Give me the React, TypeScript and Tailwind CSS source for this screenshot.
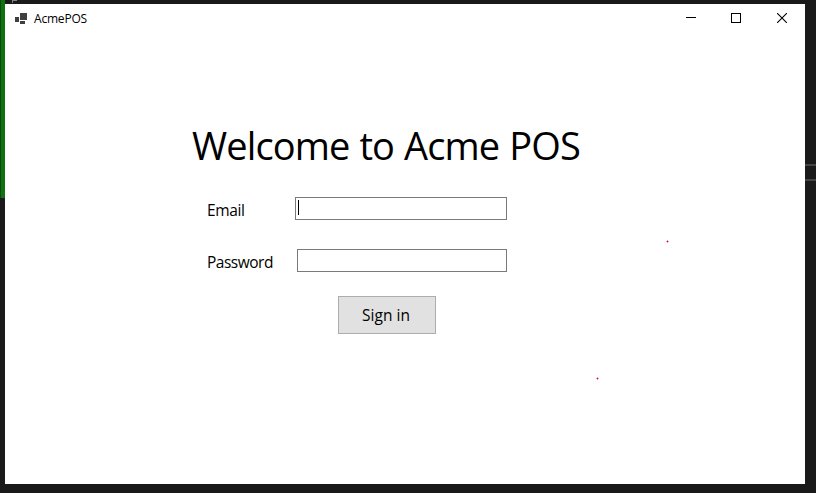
import { useState } from 'react';

const labelFont = "font-['Open_Sans','Noto_Sans',sans-serif]";

function TitleBar() {
  return (
    <header className="flex h-[30px] shrink-0 items-start justify-between">
      <div className="flex h-[29px] items-center pl-[10px]">
        <svg width="13" height="11" viewBox="0 0 13 11" shapeRendering="crispEdges" fill="#3f3f3f" aria-hidden="true">
          <path d="M0 4h4v5H0zM5 0h7v7H5zM5 8h5v3H5z" />
        </svg>
        <span className="ml-[6px] pt-px text-xs leading-[28px] tracking-[-0.2px]">AcmePOS</span>
      </div>
      <div className="flex h-[28px]">
        <button aria-label="Minimize" className="flex w-[46px] items-center justify-center">
          <svg width="10" height="10" shapeRendering="crispEdges"><path d="M0 4h10v1H0z" /></svg>
        </button>
        <button aria-label="Maximize" className="flex w-[45px] items-center justify-center pr-px">
          <svg width="10" height="10" shapeRendering="crispEdges" fill="none" stroke="black"><path d="M.5.5h9v9h-9z" /></svg>
        </button>
        <button aria-label="Close" className="flex w-[46px] items-center justify-center">
          <svg width="10" height="10" fill="none" stroke="black" strokeWidth="1.1"><path d="M0 0l10 10M10 0L0 10" /></svg>
        </button>
      </div>
    </header>
  );
}

function Speck({ className }: { className: string }) {
  return (
    <svg className={`absolute ${className}`} width="3" height="3" shapeRendering="crispEdges" aria-hidden="true">
      <path d="M1 0h1v3H1zM0 1h3v1H0z" fill="#f39aa8" />
      <path d="M1 1h1v1H1z" fill="#c8102e" />
    </svg>
  );
}

export default function App() {
  const [email, setEmail] = useState('');
  const [password, setPassword] = useState('');

  return (
    <div className={`relative h-[493px] w-[816px] overflow-hidden bg-[#1a1a1a] pt-1 pl-[5px] text-black ${labelFont}`}>
      <div className="absolute top-0 left-0 h-[198px] w-[5px] border-l border-[#0b4a0d] bg-[#107012]" />
      <div className="absolute top-0 left-[12px] h-[3px] w-[5px] border-t border-l border-[#8a7a8a]" />
      <div className="absolute top-[164px] right-0 h-[17px] w-[11px] border-y-2 border-[#444444]" />

      <main className="relative flex h-[480px] w-[800px] flex-col bg-white">
        <TitleBar />
        <h1 className="mt-[85px] ml-[187px] h-[52px] text-[38px] leading-[52px] font-normal tracking-[-0.88px] whitespace-nowrap [word-spacing:1px]">
          Welcome to Acme POS
        </h1>
        <form className="mt-[26px] ml-[202px] flex w-[300px] flex-col" onSubmit={(e) => e.preventDefault()}>
          <label className="flex h-[23px] justify-between">
            <span className="pt-px text-[15.5px] leading-6 tracking-[-0.4px]">Email</span>
            <span className="relative flex h-[23px] w-[212px]">
              <input
                value={email}
                onChange={(e) => setEmail(e.target.value)}
                className="h-full w-full border border-[#7a7a7a] bg-white px-1 outline-none"
              />
              <span className="absolute top-[3px] left-[3px] h-[15px] w-px bg-black" />
            </span>
          </label>
          <label className="mt-[29px] flex h-[23px] justify-between">
            <span className="pt-px text-[15.5px] leading-6 tracking-[-0.5px]">Password</span>
            <input
              type="password"
              value={password}
              onChange={(e) => setPassword(e.target.value)}
              className="h-[23px] w-[210px] border border-[#7a7a7a] bg-white px-1 outline-none"
            />
          </label>
          <button className="mt-6 ml-[131px] h-[38px] w-[98px] border border-[#adadad] bg-[#e1e1e1] pt-px pr-[2px] text-[15.5px] leading-[35px]">
            Sign in
          </button>
        </form>
        <Speck className="top-[236px] left-[661px]" />
        <Speck className="top-[373px] left-[591px]" />
      </main>
    </div>
  );
}
